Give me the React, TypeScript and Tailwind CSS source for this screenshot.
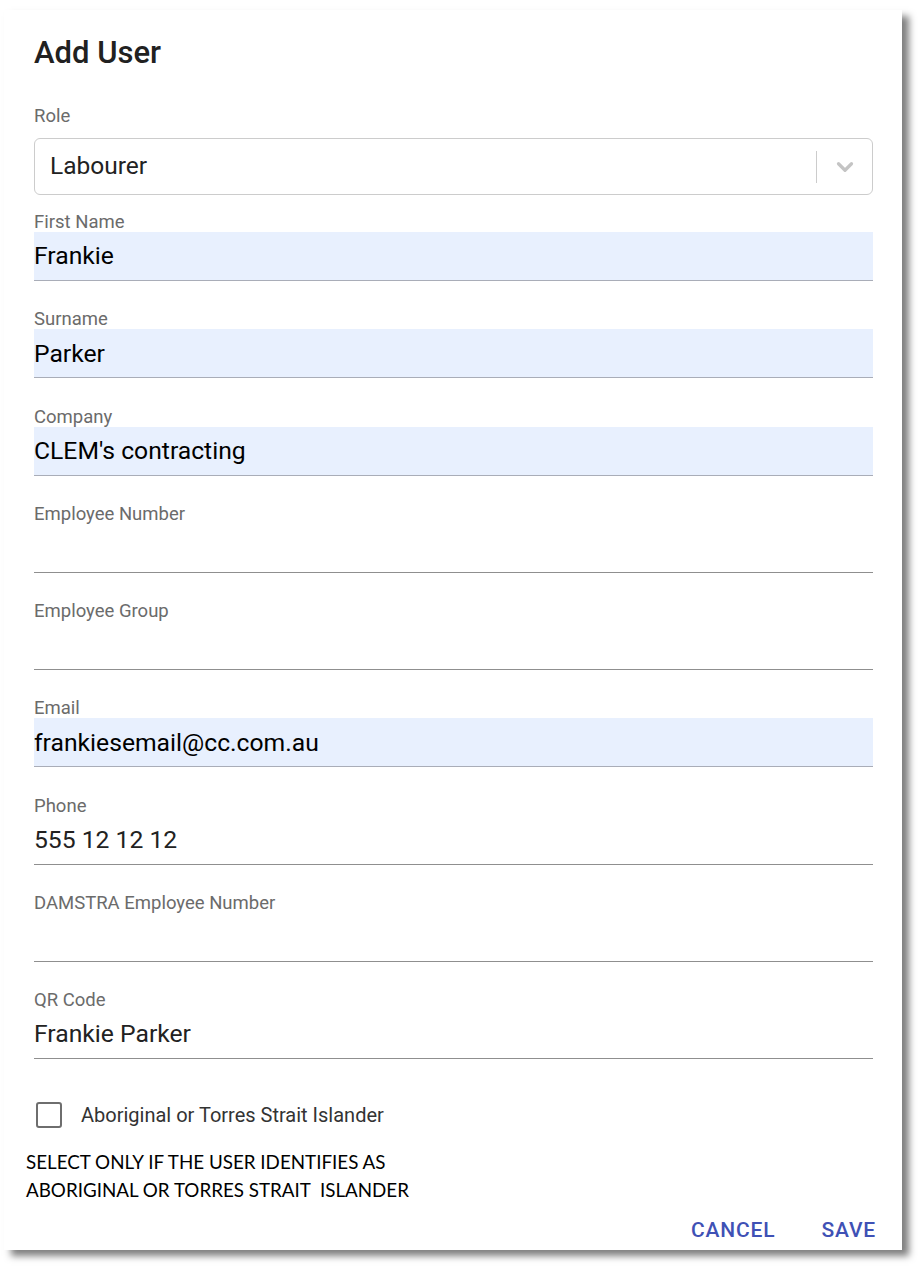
import { ChevronDown } from 'lucide-react';

type Field = { label: string; value?: string; filled?: boolean; first?: boolean };

const fields: Field[] = [
  { label: 'First Name', value: 'Frankie', filled: true, first: true },
  { label: 'Surname', value: 'Parker', filled: true },
  { label: 'Company', value: "CLEM's contracting", filled: true },
  { label: 'Employee Number' },
  { label: 'Employee Group' },
  { label: 'Email', value: 'frankiesemail@cc.com.au', filled: true },
  { label: 'Phone', value: '555 12 12 12' },
  { label: 'DAMSTRA Employee Number' },
  { label: 'QR Code', value: 'Frankie Parker' },
];

function TextField({ label, value, filled, first }: Field) {
  return (
    <div className={first ? 'mt-[17px]' : 'mt-[28.25px]'}>
      <div className="h-[20px] text-[18.5px] leading-[20px] text-[#6b6b6b]">{label}</div>
      <div
        className={`flex h-[49px] items-center border-b text-[24.7px] ${
          filled ? 'bg-[#e8f0fe] border-[#a9adb8] text-black' : 'border-[#8f8f8f] text-[#222]'
        }`}
      >
        {value}
      </div>
    </div>
  );
}

export default function App() {
  return (
    <div className="min-h-[1270px] bg-white pl-[4px] pt-[10px] font-['Roboto',sans-serif]">
      <div className="h-[1240px] w-[898px] bg-white pl-[30px] pr-[29px] pt-[23px] shadow-[7px_6px_7px_rgba(0,0,0,0.5)]">
        <h2 className="h-[40px] text-[31px] font-medium leading-[40px] text-[#212121]">Add User</h2>

        <div className="mt-[33px] h-[20px] text-[18.5px] leading-[20px] text-[#6b6b6b]">Role</div>
        <div className="mt-[12px] flex h-[57px] items-center rounded-[6px] border border-[#cccccc] pl-[15px]">
          <span className="flex-1 text-[24.5px] text-[#222]">Labourer</span>
          <span className="h-[32px] w-px bg-[#cccccc]" />
          <span className="flex w-[55px] justify-center text-[#c4c4c4]">
            <ChevronDown size={26} strokeWidth={3} />
          </span>
        </div>

        {fields.map((f) => (
          <TextField key={f.label} {...f} />
        ))}

        <label className="mt-[41px] flex items-center">
          <span className="ml-[2px] h-[26px] w-[26px] rounded-[3px] border-[2.5px] border-[#6e6e6e]" />
          <span className="ml-[19px] text-[20px] text-[#333]">Aboriginal or Torres Strait Islander</span>
        </label>

        <p className="ml-[-8px] mt-[18px] whitespace-pre font-['Lato',sans-serif] text-[18.8px] leading-[28px] text-black">
          {'SELECT ONLY IF THE USER IDENTIFIES AS\nABORIGINAL OR TORRES STRAIT  ISLANDER'}
        </p>

        <div className="mt-[13px] flex h-[28px] items-center justify-end gap-[46px]">
          <button className="text-[21px] font-medium tracking-[0.04em] text-[#3f51b5]">CANCEL</button>
          <button className="mr-[-3px] text-[21px] font-medium tracking-[0.04em] text-[#3f51b5]">SAVE</button>
        </div>
      </div>
    </div>
  );
}
